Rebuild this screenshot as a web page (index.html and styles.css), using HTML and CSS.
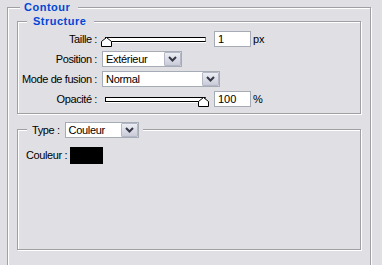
FILE: index.html
```html
<!DOCTYPE html>
<html lang="fr">
<head>
  <meta charset="UTF-8">
  <title>Contour</title>
  <link rel="stylesheet" href="styles.css">
</head>
<body>

  <div class="group outer">
    <div class="group-title">Contour</div>

    <!-- Structure -->
    <div class="group structure">
      <div class="group-title title-inner">Structure</div>
      <div class="rows">
        <div class="row">
          <span class="label">Taille :</span>
          <div class="slider">
            <div class="track"></div>
            <svg class="thumb" style="--value:0" width="11" height="10" viewBox="0 0 11 10"><polygon points="0.5,9.5 0.5,4.5 5.5,0.5 10.5,4.5 10.5,9.5" fill="#fff" stroke="#000"/></svg>
          </div>
          <input class="num" type="text" value="1">
          <span class="unit">px</span>
        </div>

        <div class="row">
          <span class="label">Position :</span>
          <div class="combo combo-position">
            <span class="combo-text">Extérieur</span>
            <span class="combo-btn"><svg width="15" height="12" viewBox="0 0 15 12"><polyline points="4,4 7.5,7.5 11,4" fill="none" stroke="#363646" stroke-width="2"/></svg></span>
          </div>
        </div>

        <div class="row">
          <span class="label">Mode de fusion :</span>
          <div class="combo combo-mode">
            <span class="combo-text">Normal</span>
            <span class="combo-btn"><svg width="15" height="12" viewBox="0 0 15 12"><polyline points="4,4 7.5,7.5 11,4" fill="none" stroke="#363646" stroke-width="2"/></svg></span>
          </div>
        </div>

        <div class="row">
          <span class="label">Opacité :</span>
          <div class="slider">
            <div class="track"></div>
            <svg class="thumb" style="--value:1" width="11" height="10" viewBox="0 0 11 10"><polygon points="0.5,9.5 0.5,4.5 5.5,0.5 10.5,4.5 10.5,9.5" fill="#fff" stroke="#000"/></svg>
          </div>
          <input class="num" type="text" value="100">
          <span class="unit">%</span>
        </div>
      </div>
    </div>

    <!-- Type -->
    <div class="group type-group">
      <div class="type-title">
        <span class="type-label">Type :</span>
        <div class="combo combo-type">
          <span class="combo-text">Couleur</span>
          <span class="combo-btn"><svg width="15" height="12" viewBox="0 0 15 12"><polyline points="4,4 7.5,7.5 11,4" fill="none" stroke="#363646" stroke-width="2"/></svg></span>
        </div>
      </div>
      <div class="color-row">
        <span class="type-label">Couleur :</span>
        <div class="swatch"></div>
      </div>
    </div>
  </div>

</body>
</html>
```

FILE: styles.css
```css
body {
  margin: 0;
  font-family: "Liberation Sans", Arial, sans-serif;
  font-size: 11px;
  line-height: 13px;
  color: #000;
  background-color: #e0dfe3;
  overflow: hidden;
}

/* group boxes: gray line with a white line offset by one pixel */
.group {
  box-sizing: border-box;
  border: 1px solid #a0a0a4;
  box-shadow: inset 1px 1px #fff, 1px 1px #fff;
}

/* the outer box runs on below the panel */
.outer {
  margin: 7px 0 0 7px;
  width: 364px;
  height: 258px;
  border-bottom: 0;
}

.structure {
  margin: 7px 0 0 9px;
  width: 344px;
  height: 93px;
}

.type-group {
  margin: 15px 0 0 9px;
  width: 344px;
  height: 121px;
}

.group-title {
  width: fit-content;
  margin: -7px 0 0 12px;
  padding: 0 8px 0 4px;
  background-color: #e0dfe3;
  color: #0046d5;
  font-weight: bold;
  letter-spacing: 0.5px;
}

.title-inner {
  margin-left: 9px;
  padding-left: 6px;
}

.rows {
  display: flex;
  flex-direction: column;
  gap: 4px;
  margin-top: 3px;
}

.row {
  display: flex;
  align-items: center;
  height: 16px;
}

.label {
  flex: none;
  width: 79px;
  text-align: right;
  letter-spacing: -0.4px;
}

.slider {
  position: relative;
  flex: none;
  width: 108px;
  height: 16px;
  margin-left: 4px;
}

.track {
  box-sizing: border-box;
  height: 5px;
  margin: 6px 3px 0 4px;
  background-color: #fff;
  border: 1px solid #000;
  border-right-color: #808080;
  box-shadow: 0 1px #fff;
}

.thumb {
  position: absolute;
  top: 6px;
  left: calc(var(--value) * 97px);
}

.num {
  box-sizing: border-box;
  width: 37px;
  height: 16px;
  margin: 0 0 0 5px;
  padding: 0 3px;
  border: 1px solid #a5acb5;
  background-color: #fff;
  font: inherit;
  color: #000;
  outline: none;
}

.unit {
  margin-left: 2px;
}

.combo {
  display: flex;
  box-sizing: border-box;
  height: 16px;
  margin-left: 5px;
  border: 1px solid #a5acb5;
  background-color: #fff;
}

.combo-position {
  width: 80px;
}

.combo-mode {
  width: 118px;
}

.combo-type {
  width: 74px;
}

.combo-text {
  flex: 1;
  padding-left: 3px;
  line-height: 14px;
  letter-spacing: -0.3px;
}

.combo-btn {
  display: flex;
  align-items: center;
  justify-content: center;
  box-sizing: border-box;
  width: 17px;
  height: 14px;
  border: 1px solid #b4b7c6;
  border-radius: 1px;
  background: linear-gradient(#eceef4, #c9cbd8);
}

.type-title {
  display: flex;
  align-items: center;
  width: fit-content;
  height: 16px;
  margin: -8px 0 0 9px;
  padding: 0 4px 0 5px;
  background-color: #e0dfe3;
}

.type-label {
  letter-spacing: -0.4px;
}

.color-row {
  display: flex;
  align-items: center;
  margin: 9px 0 0 8px;
}

.swatch {
  width: 33px;
  height: 17px;
  margin-left: 3px;
  background-color: #000;
}
```
